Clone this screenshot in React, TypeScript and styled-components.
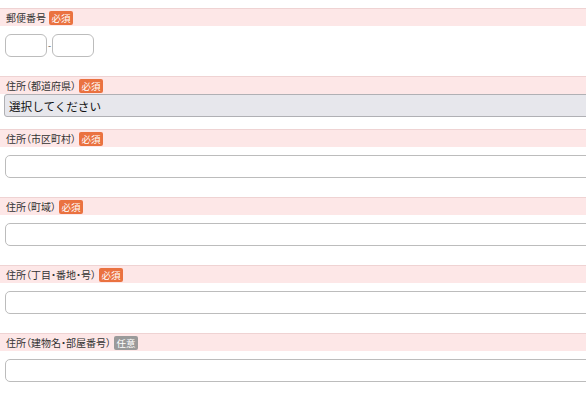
import React from 'react';
import styled, { createGlobalStyle } from 'styled-components';

interface FieldDef {
    label: string;
    required: boolean;
    kind: 'postal' | 'select' | 'text';
}

const fields: FieldDef[] = [
    { label: '郵便番号', required: true, kind: 'postal' },
    { label: '住所（都道府県）', required: true, kind: 'select' },
    { label: '住所（市区町村）', required: true, kind: 'text' },
    { label: '住所（町域）', required: true, kind: 'text' },
    { label: '住所（丁目・番地・号）', required: true, kind: 'text' },
    { label: '住所（建物名・部屋番号）', required: false, kind: 'text' },
];

const GlobalStyle = createGlobalStyle`
    html, body {
        margin: 0;
        padding: 0;
        background: #ffffff;
        overflow: hidden;
    }
    body {
        font-family: "Noto Sans CJK JP", "Noto Sans", sans-serif;
    }
`;

const App: React.FC = () => {
    return (
        <>
            <GlobalStyle />
            <Form>
                {fields.map(field => (
                    <Group key={field.label} $tight={field.kind === 'select'}>
                        <LabelBand>
                            <LabelText>{field.label}</LabelText>
                            <Badge $required={field.required}>{field.required ? '必須' : '任意'}</Badge>
                        </LabelBand>
                        {field.kind === 'postal' && (
                            <PostalRow>
                                <PostalInput />
                                <Dash>-</Dash>
                                <PostalInput />
                            </PostalRow>
                        )}
                        {field.kind === 'select' && (
                            <SelectBox>選択してください</SelectBox>
                        )}
                        {field.kind === 'text' && <TextInput />}
                    </Group>
                ))}
            </Form>
        </>
    );
};

const Form = styled('form')({
    display: 'flex',
    flexDirection: 'column',
    paddingTop: '8px',
    width: '586px',
    overflow: 'hidden',
});

const Group = styled('div')<{ $tight: boolean }>(({ $tight }) => ({
    display: 'flex',
    flexDirection: 'column',
    gap: $tight ? '0px' : '8px',
    marginBottom: $tight ? '12px' : '19px',
}));

const LabelBand = styled('div')({
    display: 'flex',
    alignItems: 'center',
    gap: '3px',
    height: '17px',
    paddingLeft: '6px',
    background: '#fde7e7',
    borderTop: '1px solid #efd3d3',
});

const LabelText = styled('span')({
    fontSize: '10px',
    color: '#333333',
    lineHeight: '17px',
    fontFeatureSettings: '"palt"',
});

const Badge = styled('span')<{ $required: boolean }>(({ $required }) => ({
    display: 'inline-flex',
    alignItems: 'center',
    justifyContent: 'center',
    height: '14px',
    padding: '0 2.5px',
    borderRadius: '2px',
    background: $required ? '#ea7240' : '#9a9a9a',
    color: '#ffffff',
    fontSize: '9.5px',
    lineHeight: '14px',
}));

const PostalRow = styled('div')({
    display: 'flex',
    alignItems: 'center',
    paddingLeft: '5px',
});

const PostalInput = styled('input')({
    boxSizing: 'border-box',
    width: '42px',
    height: '23px',
    border: '1px solid #bcbcbc',
    borderRadius: '6px',
    background: '#ffffff',
    outline: 'none',
});

const Dash = styled('span')({
    width: '5px',
    textAlign: 'center',
    fontSize: '9px',
    color: '#555',
    lineHeight: '23px',
});

const SelectBox = styled('div')({
    boxSizing: 'border-box',
    display: 'flex',
    alignItems: 'center',
    marginLeft: '4px',
    width: '600px',
    height: '23px',
    paddingLeft: '4px',
    background: '#e7e7ec',
    border: '1px solid #b0b0b4',
    borderRadius: '3px',
    fontSize: '11.6px',
    color: '#111',
});

const TextInput = styled('input')({
    boxSizing: 'border-box',
    marginLeft: '5px',
    width: '600px',
    height: '23px',
    border: '1px solid #bcbcbc',
    borderRadius: '5px',
    background: '#ffffff',
    outline: 'none',
});

export default App;
